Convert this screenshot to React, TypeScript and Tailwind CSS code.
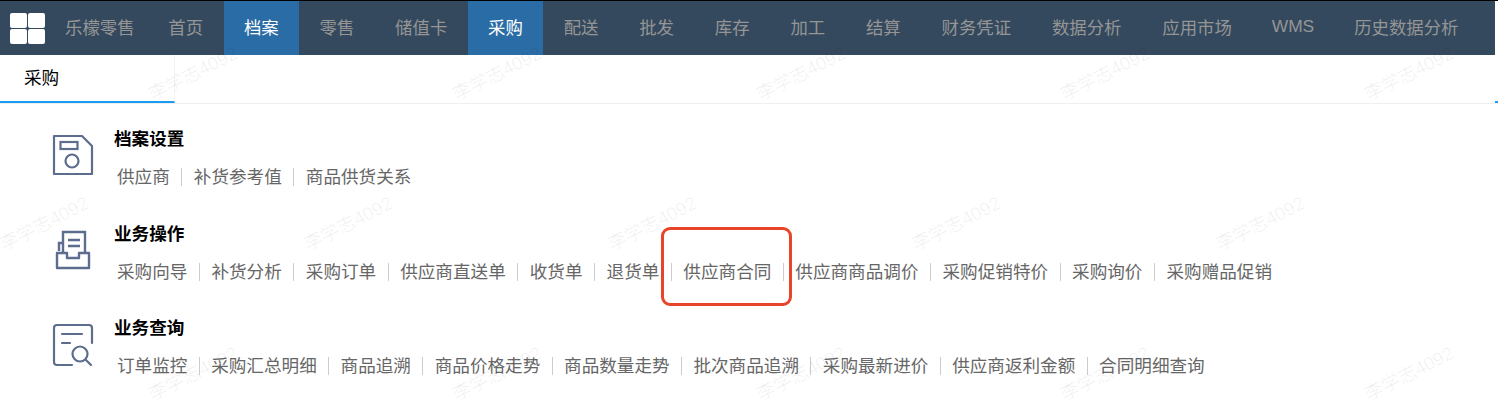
const navItems = ["首页", "档案", "零售", "储值卡", "采购", "配送", "批发", "库存", "加工", "结算", "财务凭证", "数据分析", "应用市场", "WMS", "历史数据分析"];
const activeNav = ["档案", "采购"];

const sections = [
  { title: "档案设置", icon: <SaveIcon />, sep: "mx-[11.500px]", links: ["供应商", "补货参考值", "商品供货关系"] },
  { title: "业务操作", icon: <TrayIcon />, sep: "mx-[11.500px]", links: ["采购向导", "补货分析", "采购订单", "供应商直送单", "收货单", "退货单", "供应商合同", "供应商商品调价", "采购促销特价", "采购询价", "采购赠品促销"] },
  { title: "业务查询", icon: <SearchDocIcon />, sep: "mx-[11.400px]", links: ["订单监控", "采购汇总明细", "商品追溯", "商品价格走势", "商品数量走势", "批次商品追溯", "采购最新进价", "供应商返利金额", "合同明细查询"] },
];

// watermark rows repeat every 150px, every other row shifted left by half a column
const watermarks = [0, 1, 2].flatMap((row) =>
  [0, 1, 2, 3, 4].map((col) => ({
    x: (row === 1 ? -4 : 145) + col * 304,
    y: 62 + row * 150,
  }))
);

function SaveIcon() {
  return (
    <svg width="42" height="42" viewBox="0 0 42 42" fill="none" stroke="#5d6d8e" strokeWidth="2.2">
      <path d="M2 2h28l10 10v28H2z" strokeLinejoin="round" />
      <rect x="8.500" y="8" width="17" height="7" />
      <circle cx="20" cy="27" r="6.500" />
    </svg>
  );
}

function TrayIcon() {
  return (
    <svg width="36" height="42" viewBox="0 0 36 42" fill="none" stroke="#5d6d8e" strokeWidth="2.400">
      <path d="M8 24V3h22v21" />
      <path d="M13 11h12M13 17h12" />
      <path d="M8 14H4v8" />
      <path d="M2 24h10v5h12v-5h10v15H2z" strokeLinejoin="round" />
    </svg>
  );
}

function SearchDocIcon() {
  return (
    <svg width="42" height="44" viewBox="0 0 42 44" fill="none" stroke="#5d6d8e" strokeWidth="2.200" strokeLinecap="round">
      <path d="M40 20V5q0-3-3-3H5Q2 2 2 5v34q0 3 3 3h15" />
      <path d="M10 11h20M10 20h8" />
      <circle cx="28" cy="31" r="7.500" />
      <path d="M34 37l5 5" />
    </svg>
  );
}

export default function App() {
  return (
    <div className="relative w-[1498px] h-[406px] overflow-hidden bg-white font-['Liberation_Sans','Noto_Sans_CJK_SC',sans-serif] text-[17.6px] leading-[24px]">
      <div className="h-px w-full bg-black" />

      {/* Top nav */}
      <div className="flex h-[54px] w-[1495px] items-center bg-[#34495e] text-[17.4px] text-[#959595]">
        <div className="ml-[10px] grid h-[31px] w-[35px] shrink-0 grid-cols-2 gap-[1px]">
          <div className="rounded-[2px] bg-white" />
          <div className="rounded-[2px] bg-white" />
          <div className="rounded-[2px] bg-white" />
          <div className="rounded-[2px] bg-white" />
        </div>
        <span className="ml-[20px] mr-[13.400px] whitespace-nowrap">乐檬零售</span>
        {navItems.map((item) => (
          <div
            key={item}
            className={
              activeNav.includes(item)
                ? "flex h-full items-center whitespace-nowrap bg-[#2a6ca5] px-[20.400px] text-white"
                : item === "WMS"
                  ? "flex h-full items-center whitespace-nowrap px-[19.500px] pb-[4px]"
                  : "flex h-full items-center whitespace-nowrap px-[20.400px]"
            }
          >
            {item}
          </div>
        ))}
      </div>

      {/* Tab bar */}
      <div className="flex h-[49px] items-start justify-between border-b border-[#eeeeee]">
        <div className="flex h-[48px] w-[175px] items-center border-r border-b-[2px] border-r-[#f2f2f2] border-b-[#1a9cf5] pl-[24px] text-black">
          采购
        </div>
        <div className="mt-[46px] h-[2px] w-[3px] bg-[#1a9cf5]" />
      </div>

      {/* Menu sections */}
      <div className="flex flex-col gap-[35px] pt-[23px]">
        {sections.map((section) => (
          <div key={section.title} className="flex h-[59.500px]">
            <div className="-mt-px flex w-[114px] justify-center pl-[31px] pt-[8px]">{section.icon}</div>
            <div>
              <div className="font-bold text-black">{section.title}</div>
              <div className="mt-[14px] flex pl-[3px] text-[#666666]">
                {section.links.map((link, i) => (
                  <div key={link} className="flex items-center">
                    {i > 0 && <div className={`${section.sep} h-[18px] w-px bg-[#cccccc]`} />}
                    <span>{link}</span>
                  </div>
                ))}
              </div>
            </div>
          </div>
        ))}
      </div>

      {/* Red annotation */}
      <div className="absolute left-[661px] top-[227px] h-[79px] w-[131px] rounded-[9px] border-[3px] border-[#e8442a]" />

      {/* Watermark */}
      <div className="pointer-events-none absolute inset-0">
        {watermarks.map((w) => (
          <div
            key={`${w.x}-${w.y}`}
            className="absolute -rotate-[27deg] whitespace-nowrap text-[18.5px] text-black/[0.06]"
            style={{ left: w.x, top: w.y }}
          >
            李学志4092
          </div>
        ))}
      </div>
    </div>
  );
}
